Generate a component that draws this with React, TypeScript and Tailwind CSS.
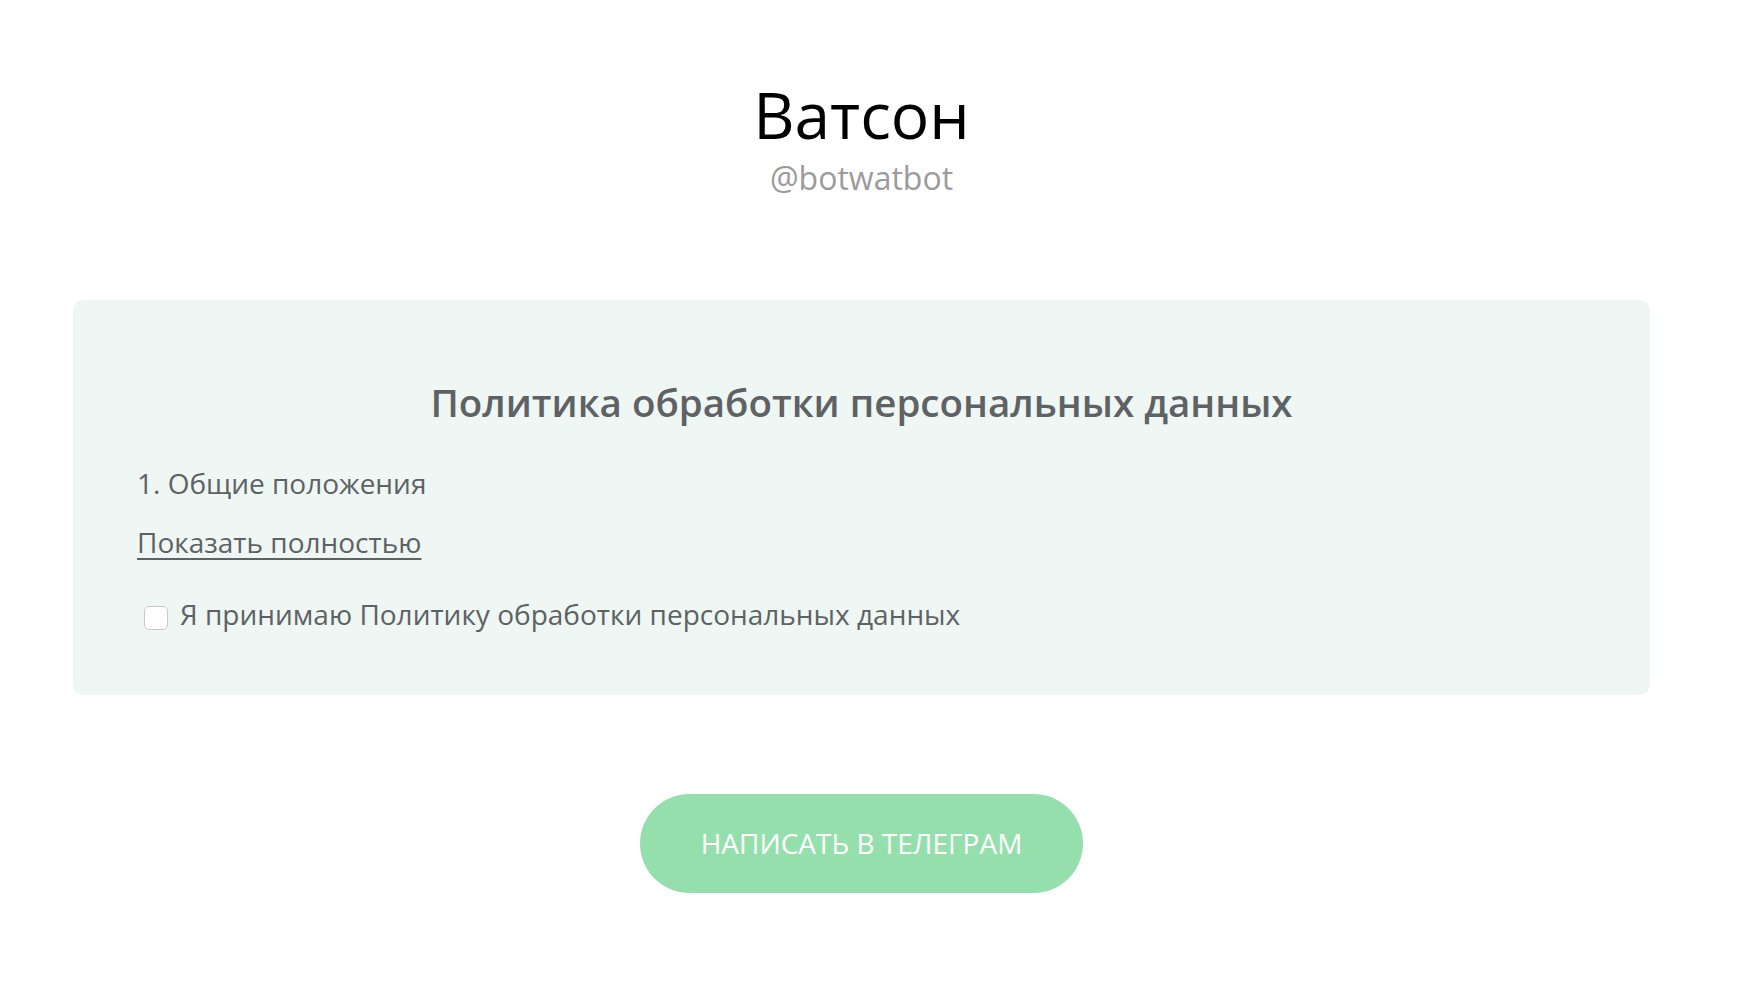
import React, { useState } from 'react';

export default function App() {
  const [accepted, setAccepted] = useState(false);

  return (
    <div className="min-h-screen bg-white pl-[73px] pr-[106px] pt-[83px] pb-[80px] font-['Open_Sans',sans-serif]">
      <div className="flex flex-col items-center">
        <h1 className="text-[64px] leading-none font-normal text-black">Ватсон</h1>
        <p className="mt-[15px] text-[32px] leading-none text-[#9b9b9b]">@botwatbot</p>
      </div>

      <div className="mt-[106px] rounded-[10px] bg-[#eef7f3] pl-[64px] pr-[64px] pt-[83px] pb-[65px]">
        <h2 className="text-center text-[38.5px] leading-none font-semibold text-[#5e6265]">
          Политика обработки персональных данных
        </h2>
        <p className="mt-[47px] text-[28px] leading-none text-[#5e6265]">1. Общие положения</p>
        <a href="#" className="mt-[31px] block w-fit text-[28px] leading-none text-[#5e6265] underline underline-offset-[5px] decoration-[1.5px]">
          Показать полностью
        </a>
        <label className="mt-[44px] flex items-start cursor-pointer">
          <input
            type="checkbox"
            checked={accepted}
            onChange={(e) => setAccepted(e.target.checked)}
            className="ml-[7px] mt-[6px] h-[24px] w-[24px] appearance-none rounded-[5px] border border-[#c8c8c8] bg-white checked:bg-[#95dfac]"
          />
          <span className="ml-[12px] text-[28px] leading-none text-[#5e6265]">
            Я принимаю Политику обработки персональных данных
          </span>
        </label>
      </div>

      <div className="mt-[99px] flex justify-center">
        <button
          type="button"
          className="h-[99px] w-[443px] rounded-full bg-[#95dfac] text-[28px] uppercase text-white"
        >
          Написать в Телеграм
        </button>
      </div>
    </div>
  );
}
